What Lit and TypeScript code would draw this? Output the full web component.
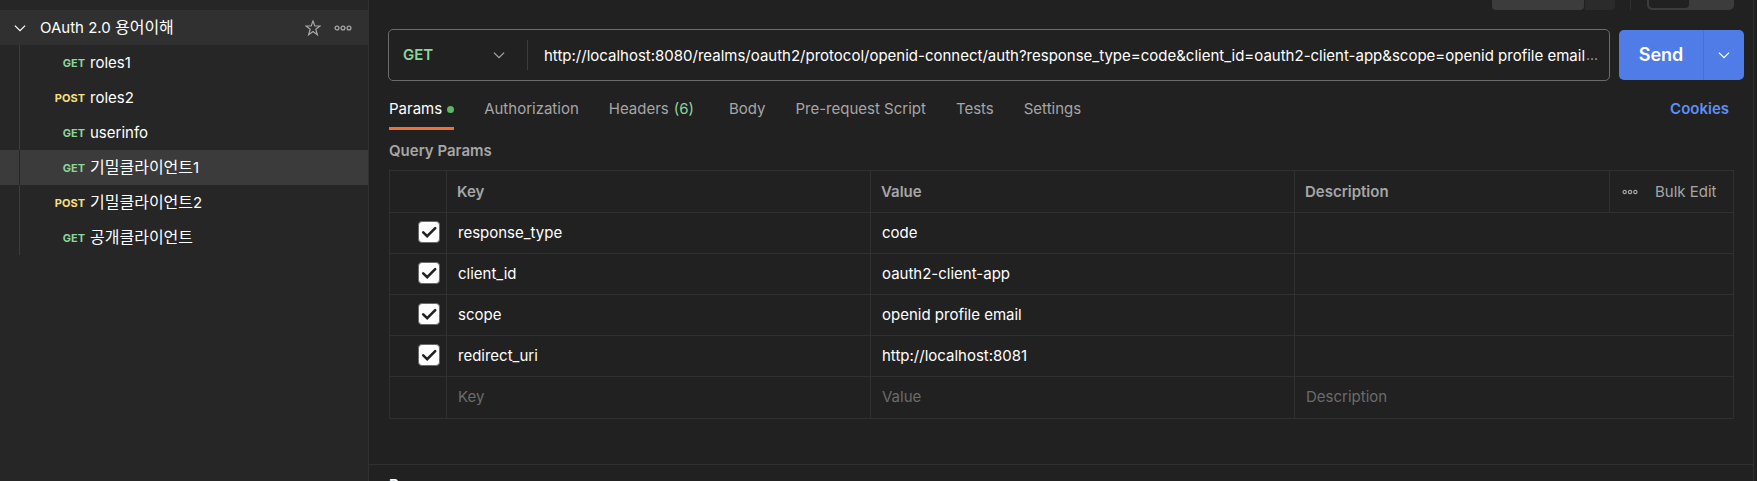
import { LitElement, html, css, svg } from "lit";
import { customElement, state } from "lit/decorators.js";
import { classMap } from "lit/directives/class-map.js";

const chevron = svg`<path d="M1 1.5 L6.5 7 L12 1.5" fill="none" stroke="currentColor" stroke-width="1.3" />`;
const dots = svg`<g fill="none" stroke="currentColor" stroke-width="1.3"><circle cx="3" cy="3" r="1.9"/><circle cx="9" cy="3" r="1.9"/><circle cx="15" cy="3" r="1.9"/></g>`;

@customElement("collection-tree")
class CollectionTree extends LitElement {
  static styles = css`
    :host { display: block; background: #262626; border-right: 1px solid #303030; padding-top: 10px; box-sizing: border-box; }
    button { font: inherit; color: inherit; background: none; border: 0; padding: 0; cursor: pointer; display: flex; align-items: center; }
    svg { display: block; flex: none; }
    .head { display: flex; align-items: center; height: 35px; background: #303030; padding: 0 16px 0 14px; }
    .toggle { gap: 14px; flex: 1; text-align: left; }
    .tools { display: flex; align-items: center; gap: 13px; color: #a6a6a6; }
    .list { list-style: none; margin: 0; padding: 0; background: linear-gradient(#3c3c3c, #3c3c3c) 19px 0 / 1px 100% no-repeat; }
    .item { width: 100%; height: 35px; gap: 5px; }
    .selected { background: linear-gradient(#262626, #262626) 19px 0 / 1px 100% no-repeat #3b3b3b; }
    .method { width: 85px; text-align: right; font-size: 11px; font-weight: 700; color: #8ad69b; }
    .post { color: #f5e07f; }
    .ko { font-size: 16px; }
  `;
  @state() selected = 3;
  items = [
    ["GET", "", "roles1"], ["POST", "", "roles2"], ["GET", "", "userinfo"],
    ["GET", "기밀클라이언트", "1"], ["POST", "기밀클라이언트", "2"], ["GET", "공개클라이언트", ""],
  ];
  render() {
    return html`
      <div class="head">
        <button class="toggle" aria-expanded="true"><svg width="12" height="8" viewBox="0 0 13 8">${chevron}</svg><span>OAuth 2.0 <span class="ko">용어이해</span></span></button>
        <div class="tools">
          <button aria-label="Favorite"><svg width="16" height="16" viewBox="0 0 16 16"><path d="M8 1 L9.8 6 H15 L10.8 9.2 L12.4 14.8 L8 11.5 L3.6 14.8 L5.2 9.2 L1 6 H6.2 Z" fill="none" stroke="currentColor" stroke-width="1.2"/></svg></button>
          <button aria-label="More actions"><svg width="18" height="6" viewBox="0 0 18 6">${dots}</svg></button>
        </div>
      </div>
      <ul class="list">
        ${this.items.map(([m, ko, n], i) => html`<li><button class=${classMap({ item: true, selected: i === this.selected })} @click=${() => (this.selected = i)}>
          <span class=${classMap({ method: true, post: m === "POST" })}>${m}</span><span>${ko ? html`<span class="ko">${ko}</span>` : ""}${n}</span></button></li>`)}
      </ul>`;
  }
}

@customElement("params-table")
class ParamsTable extends LitElement {
  static styles = css`
    :host { display: block; }
    table { width: 100%; border-collapse: collapse; table-layout: fixed; }
    th, td { border: 1px solid #303030; padding: 0; height: 40px; text-align: left; box-sizing: content-box; }
    td { vertical-align: top; }
    th { height: 41px; font-weight: 600; color: #a6a6a6; padding-left: 10px; }
    .new td { height: 41px; }
    .check-col { width: 57px; }
    .key-col { width: 424px; }
    .action-col { width: 124px; }
    .actions { display: flex; align-items: center; gap: 17px; padding-left: 2px; }
    .actions button { font: inherit; font-weight: 400; color: #a6a6a6; background: none; border: 0; padding: 0; cursor: pointer; }
    svg { display: block; }
    .check { padding: 0 0 0 28px; }
    .check label { position: relative; display: block; width: 22px; height: 22px; margin-top: 8px; }
    .box { appearance: none; display: block; box-sizing: border-box; margin: 0; width: 22px; height: 22px; border: 1px solid #6b6b6b; border-radius: 4px; background: transparent; }
    .box:checked { background: #fff; }
    .tick { position: absolute; inset: 0; color: #212121; pointer-events: none; }
    .cell { display: block; box-sizing: border-box; width: 100%; height: 38px; border: 0; outline: 0; background: none; padding: 0 11px; font: inherit; color: #fff; }
    .cell::placeholder { color: #6b6b6b; opacity: 1; }
  `;
  rows = [["response_type", "code"], ["client_id", "oauth2-client-app"], ["scope", "openid profile email"], ["redirect_uri", "http://localhost:8081"]];
  render() {
    return html`<table>
      <colgroup><col class="check-col" /><col class="key-col" /><col class="key-col" /><col /><col class="action-col" /></colgroup>
      <thead><tr><th></th><th scope="col">Key</th><th scope="col">Value</th><th scope="col">Description</th>
        <th><div class="actions"><button aria-label="Column options"><svg width="16" height="6" viewBox="0 0 18 6">${dots}</svg></button><button>Bulk Edit</button></div></th></tr></thead>
      <tbody>
        ${this.rows.map(([k, v]) => html`<tr>
          <td class="check"><label><input class="box" type="checkbox" checked aria-label="Enable ${k}" /><svg class="tick" width="22" height="22" viewBox="0 0 22 22"><path d="M5.2 11.4 L9.2 15.2 L17.2 7.2" fill="none" stroke="currentColor" stroke-width="2.6" stroke-linecap="round"/></svg></label></td>
          <td><input class="cell" aria-label="Key" .value=${k} /></td>
          <td><input class="cell" aria-label="Value" .value=${v} /></td>
          <td colspan="2"><input class="cell" aria-label="Description" /></td></tr>`)}
        <tr class="new"><td></td>
          <td><input class="cell" aria-label="New key" placeholder="Key" /></td>
          <td><input class="cell" aria-label="New value" placeholder="Value" /></td>
          <td colspan="2"><input class="cell" aria-label="New description" placeholder="Description" /></td></tr>
      </tbody></table>`;
  }
}

@customElement("app-root")
class AppRoot extends LitElement {
  static styles = css`
    :host { display: grid; grid-template-columns: 369px minmax(0, 1fr) 3px; height: 100vh; overflow: hidden; background: #212121; color: #fff; font: 15px/20px Inter, "Noto Sans CJK KR", sans-serif; }
    button { font: inherit; color: inherit; background: none; border: 0; padding: 0; cursor: pointer; }
    svg { display: block; }
    .main { display: flex; flex-direction: column; border-right: 1px solid #303030; overflow: hidden; }
    .main > * { flex: none; }
    .top { display: flex; justify-content: flex-end; height: 10px; padding-right: 19px; }
    .save { width: 92px; background: #3c3c3c; border-radius: 0 0 4px 4px; }
    .save-more { width: 30px; margin-left: 1px; background: #2b2b2b; border-radius: 0 0 4px 0; }
    .rule { width: 1px; margin: 0 16px 0 15px; background: #303030; }
    .switch { display: flex; width: 87px; padding: 0 2px 2px; box-sizing: border-box; background: #3c3c3c; border-radius: 0 0 5px 5px; }
    .switch-on { width: 40px; background: #212121; border-radius: 0 0 4px 4px; }
    .request { display: flex; align-items: center; gap: 9px; padding: 19px 9px 0 19px; }
    .bar { display: flex; align-items: center; flex: 1; min-width: 0; height: 50px; border: 1px solid #6b6b6b; border-radius: 5px; }
    .verb { position: relative; flex: none; width: 138px; border-right: 1px solid #3c3c3c; }
    .verb select { appearance: none; display: block; width: 100%; height: 30px; border: 0; padding: 0 0 0 14px; background: none; font: inherit; font-weight: 600; color: #8ad69b; }
    .verb svg { position: absolute; right: 22px; top: 11px; color: #a6a6a6; pointer-events: none; }
    .url { flex: 1; min-width: 0; height: 30px; border: 0; outline: 0; padding: 0; margin-left: 16px; background: none; font: inherit; color: #fff; }
    .more { margin-right: 11px; color: #a6a6a6; font-size: 14px; }
    .send { display: flex; height: 50px; border-radius: 5px; background: #4f7ce6; overflow: hidden; }
    .send-main { width: 84px; font-size: 18px; font-weight: 600; }
    .send-more { width: 41px; display: grid; place-items: center; border-left: 1px solid #4471d6; box-sizing: border-box; }
    .tabs { display: flex; align-items: flex-start; gap: 30px; padding: 18px 24px 0 20px; color: #a6a6a6; }
    .tab { display: flex; align-items: center; gap: 5px; height: 31px; padding-bottom: 8px; box-sizing: border-box; border-bottom: 3px solid transparent; }
    .active { color: #fff; border-bottom-color: #f0703a; }
    .dot { width: 7px; height: 7px; border-radius: 50%; background: #5cb85c; }
    .count { color: #8ad69b; margin-right: 5px; }
    .cookies { margin-left: auto; color: #5f8ff5; font-weight: 600; text-decoration: none; }
    h2 { margin: 0; font-size: 15px; line-height: 20px; font-weight: 600; }
    .title { padding: 11px 20px 9px; color: #a6a6a6; }
    .table { padding: 0 19px 0 20px; }
    .response { margin-top: 45px; border-top: 1px solid #303030; padding: 10px 20px; }
  `;
  tabs = ["Params", "Authorization", "Headers", "Body", "Pre-request Script", "Tests", "Settings"];
  @state() tab = "Params";
  render() {
    return html`
      <collection-tree></collection-tree>
      <main class="main">
        <div class="top"><div class="save"></div><div class="save-more"></div><div class="rule"></div><div class="switch"><div class="switch-on"></div></div></div>
        <div class="request">
          <div class="bar">
            <div class="verb"><select aria-label="Method"><option>GET</option><option>POST</option></select><svg width="12" height="8" viewBox="0 0 13 8">${chevron}</svg></div>
            <input class="url" aria-label="Request URL" .value=${"http://localhost:8080/realms/oauth2/protocol/openid-connect/auth?response_type=code&client_id=oauth2-client-app&scope=openid profile email"} /><span class="more">...</span>
          </div>
          <div class="send"><button class="send-main">Send</button><button class="send-more" aria-label="Send options"><svg width="12" height="8" viewBox="0 0 13 8">${chevron}</svg></button></div>
        </div>
        <nav class="tabs">
          ${this.tabs.map((t) => html`<button class=${classMap({ tab: true, active: t === this.tab })} @click=${() => (this.tab = t)}>${t}${t === "Params" ? html`<span class="dot"></span>` : ""}${t === "Headers" ? html`<span class="count">(6)</span>` : ""}</button>`)}
          <a class="cookies" href="#cookies">Cookies</a>
        </nav>
        <h2 class="title">Query Params</h2>
        <params-table class="table"></params-table>
        <section class="response"><h2>Response</h2></section>
      </main>
      <div></div>`;
  }
}
